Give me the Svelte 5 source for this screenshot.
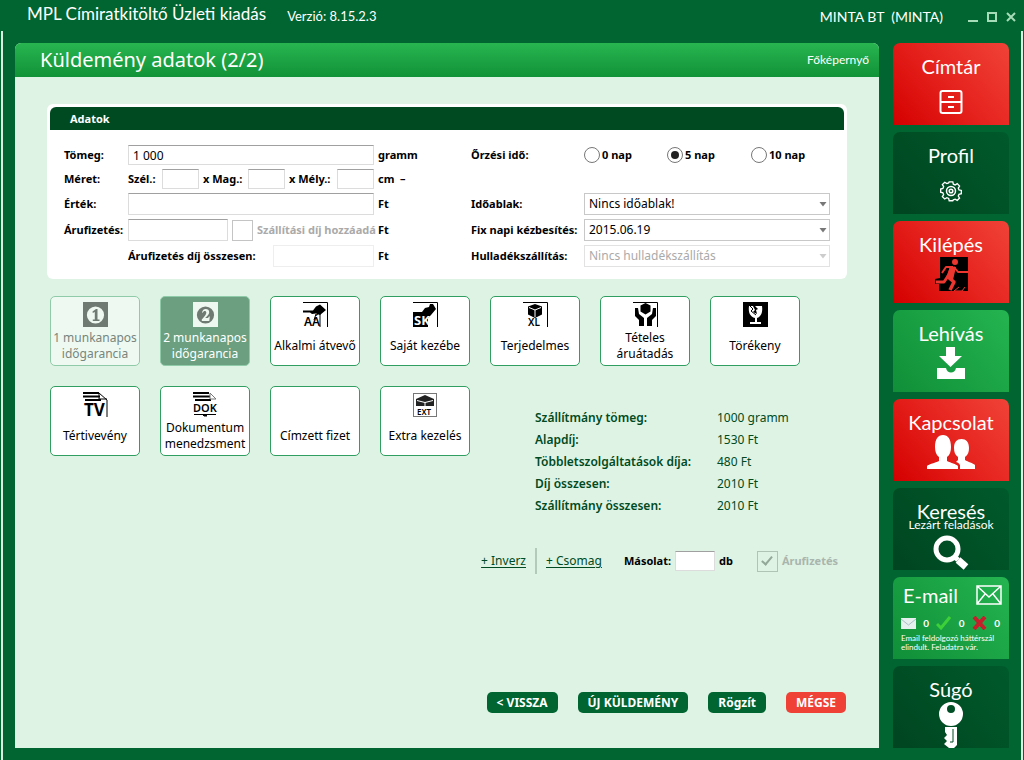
<script>
  let weight = $state('1 000');
  let storage = $state('5');
  const storageOptions = ['0', '5', '10'];
  const services = [
    { icon: 'one', label: '1 munkanapos időgarancia', state: 'faded' },
    { icon: 'two', label: '2 munkanapos időgarancia', state: 'selected' },
    { icon: 'aa', label: 'Alkalmi átvevő' },
    { icon: 'sk', label: 'Saját kezébe' },
    { icon: 'xl', label: 'Terjedelmes' },
    { icon: 'hands', label: 'Tételes áruátadás' },
    { icon: 'glass', label: 'Törékeny' },
    { icon: 'tv', label: 'Tértivevény' },
    { icon: 'dok', label: 'Dokumentum menedzsment' },
    { icon: 'none', label: 'Címzett fizet' },
    { icon: 'ext', label: 'Extra kezelés' }
  ];
  const summary = [
    ['Szállítmány tömeg:', '1000 gramm'],
    ['Alapdíj:', '1530 Ft'],
    ['Többletszolgáltatások díja:', '480 Ft'],
    ['Díj összesen:', '2010 Ft'],
    ['Szállítmány összesen:', '2010 Ft']
  ];
</script>

{#snippet arrow()}
  <svg class="arrow" width="8" height="6" viewBox="0 0 8 6" aria-hidden="true"><path d="M0.5 1h7L4 5.5z" fill="currentColor" /></svg>
{/snippet}

{#snippet serviceIcon(name)}
  <svg width="25" height="25" viewBox="0 0 25 25" aria-hidden="true">
    {#if name === 'one' || name === 'two'}
      <rect width="25" height="25" fill={name === 'one' ? '#6f7a73' : '#eef8f1'} />
      <circle cx="12.5" cy="13" r="8.6" fill={name === 'one' ? '#eef8f1' : '#6f7a73'} />
      {#if name === 'one'}
        <path d="M9.5 9.5 13 7h1.5v10.5h2V19H9.8v-1.500h2V10l-2 .9z" fill="#6f7a73" />
      {:else}
        <path d="M9 10.500C9.500 8 11 7 12.700 7c2 0 3.500 1.200 3.500 3.200 0 1.800-1.200 3-4 5.800H15l1-1.500h.8L16.300 19H8.800v-1.500c3-3 4.500-5 4.500-6.900 0-1.100-.6-1.700-1.500-1.700-.9 0-1.600.6-2 1.900z" fill="#eef8f1" />
      {/if}
    {:else if name === 'aa'}
      <path d="M0 .5h24.500V25" fill="none" stroke="#000" />
      <path d="M0 8.500h10l3-4 4-2 6 5.500-6 5-4-1.500-4 .500-2-1.500H0z" fill="#000" />
      <path d="M17 10v15M13 12l-2 6" stroke="#000" />
      <text x="1" y="24" textLength="0" font-family="Noto Sans" font-size="12" font-weight="600">AÁ</text>
    {:else if name === 'sk'}
      <path d="M0 .5h24.500V25" fill="none" stroke="#000" />
      <path d="M0 10h9l3-4 4-1 1-3h3l3 5-5 6-3 3v9H0z" fill="#000" />
      <text x="1" y="23" font-family="Noto Sans" font-size="13" font-weight="700" fill="#fff">SK</text>
    {:else if name === 'xl'}
      <path d="M0 .5h24.500V25" fill="none" stroke="#000" />
      <path d="m12 2 7 2.500v8L12 16l-7-3.500v-8z" fill="#000" />
      <path d="m6 5.500 6 2.500 6-2.500M12 8v7" fill="none" stroke="#fff" />
      <text x="5" y="24" font-family="Noto Sans" font-size="10" font-weight="600">XL</text>
    {:else if name === 'hands'}
      <path d="M0 .5h24.500V25" fill="none" stroke="#000" />
      <path d="m12.500 1 5 2.500v6l-5 3-5-3v-6z" fill="#000" />
      <path d="M2 6h3l1 6 5 4v8H6v-6l-4-4zM23 6h-3l-1 6-5 4v8h5v-6l4-4z" fill="#000" />
    {:else if name === 'glass'}
      <rect width="25" height="25" fill="#000" />
      <path d="M6 4l4 0 2 4-2 2 4 2-1-4 2-1-3-3h7c1 6-1 11-5 12v4h4v2H7v-2h5v-4C7 15 5 10 6 4z" fill="#fff" />
      <path d="m6 3 4 4-2 2 5 4" fill="none" stroke="#000" />
    {:else if name === 'tv'}
      <path d="M0 1h16M0 4.500h17M2 8h16" stroke="#000" stroke-width="2" />
      <path d="M16 1l8 7v17M16 1v6h8" fill="none" stroke="#000" />
      <text x="1" y="24" font-family="Noto Sans" font-size="17" font-weight="700">TV</text>
    {:else if name === 'dok'}
      <path d="M0 1h16M0 4.500h17M2 8h16" stroke="#000" stroke-width="2" />
      <path d="m17 1 6 6h-6z" fill="none" stroke="#777" />
      <text x="0" y="20" font-family="Noto Sans" font-size="11" font-weight="600">DOK</text>
      <path d="M1 22.500h22M9 22l2 2h3l-2-2" stroke="#000" />
    {:else if name === 'ext'}
      <rect x=".5" y="1.500" width="23" height="23" fill="#fff" stroke="#777" />
      <path d="m12 3 9 4v7H3V7z" fill="#222" />
      <path d="m4 8.500 8 2 8-2M12 10v4" fill="none" stroke="#fff" />
      <text x="4" y="23" font-family="Noto Sans" font-size="8" font-weight="600">EXT</text>
    {/if}
  </svg>
{/snippet}

<div class="app">
  <header class="titlebar">
    <h1>MPL Címiratkitöltő Üzleti kiadás</h1>
    <span class="version">Verzió: 8.15.2.3</span>
    <span class="user">MINTA BT&nbsp; (MINTA)</span>
    <div class="window-buttons">
      <button aria-label="Kis méret"><svg width="10" height="10"><path d="M0 9h10" stroke="#a6dcb8" stroke-width="2" /></svg></button>
      <button aria-label="Teljes méret"><svg width="10" height="10"><rect x="1" y="1" width="8" height="8" fill="none" stroke="#a6dcb8" stroke-width="2" /></svg></button>
      <button aria-label="Bezárás"><svg width="10" height="10"><path d="m1 1 8 8M9 1 1 9" stroke="#a6dcb8" stroke-width="2" /></svg></button>
    </div>
  </header>

  <div class="frame">
    <main>
      <div class="main-head">
        <h2>Küldemény adatok (2/2)</h2>
        <a href="#home">Főképernyő</a>
      </div>
      <div class="content">
        <section class="card">
          <h3>Adatok</h3>
          <div class="form">
            <label for="weight">Tömeg:</label>
            <input id="weight" type="text" bind:value={weight} />
            <span class="unit">gramm</span>
            <span>Őrzési idő:</span>
            <div class="radios">
              {#each storageOptions as days}
                <label><input type="radio" name="storage" value={days} bind:group={storage} />{days} nap</label>
              {/each}
            </div>

            <span>Méret:</span>
            <div class="dims">
              <label for="w">Szél.:</label><input id="w" type="text" />
              <label for="h">x Mag.:</label><input id="h" type="text" />
              <label for="d">x Mély.:</label><input id="d" type="text" />
            </div>
            <span class="unit">cm&nbsp; –</span>
            <span></span><span></span>

            <label for="value">Érték:</label>
            <input id="value" type="text" />
            <span class="unit">Ft</span>
            <label for="window">Időablak:</label>
            <div class="select"><select id="window"><option>Nincs időablak!</option></select>{@render arrow()}</div>

            <label for="cod">Árufizetés:</label>
            <div class="cod">
              <input id="cod" type="text" />
              <label class="muted"><input type="checkbox" disabled />Szállítási díj hozzáadása</label>
            </div>
            <span class="unit">Ft</span>
            <label for="fixday">Fix napi kézbesítés:</label>
            <div class="select"><select id="fixday"><option>2015.06.19</option></select>{@render arrow()}</div>

            <span></span>
            <div class="total">
              <label for="total">Árufizetés díj összesen:</label>
              <input id="total" type="text" disabled />
            </div>
            <span class="unit">Ft</span>
            <label for="waste">Hulladékszállítás:</label>
            <div class="select off"><select id="waste" disabled><option>Nincs hulladékszállítás</option></select>{@render arrow()}</div>
          </div>
        </section>

        <section class="services">
          {#each services as s}
            <button class="service {s.state ?? ''}">
              {@render serviceIcon(s.icon)}
              <span>{s.label}</span>
            </button>
          {/each}
          <dl class="summary">
            {#each summary as [name, value]}
              <dt>{name}</dt>
              <dd>{value}</dd>
            {/each}
          </dl>
        </section>

        <div class="extras">
          <a href="#inverz">+ Inverz</a>
          <span class="bar"></span>
          <a href="#csomag">+ Csomag</a>
          <label class="copies">Másolat:<input type="text" />db</label>
          <label class="muted"><input type="checkbox" checked disabled />Árufizetés</label>
        </div>

        <footer>
          <button>&lt; VISSZA</button>
          <button>ÚJ KÜLDEMÉNY</button>
          <button>Rögzít</button>
          <button class="cancel">MÉGSE</button>
        </footer>
      </div>
    </main>

    <nav>
      <button class="tile red">
        <span>Címtár</span>
        <svg class="mid" width="24" height="24" viewBox="0 0 24 24"><g fill="none" stroke="#fff" stroke-width="2"><rect x="1.500" y="1" width="21" height="22" rx="2" /><path d="M2 12h20" /></g><path d="M9 6h6v2H9zM9 16h6v2H9z" fill="#fff" /></svg>
      </button>
      <button class="tile dark">
        <span>Profil</span>
        <svg class="mid" width="24" height="24" viewBox="0 0 24 24" fill="none" stroke="#fff" stroke-width="1.500"><path d="m10 2 4 0 .6 2.700 2 .8 2.300-1.500 2.600 2.700-1.400 2.300.8 2 2.600.6v3.600l-2.600.6-.8 2 1.400 2.300-2.600 2.600-2.300-1.400-2 .8L14 23h-4l-.6-2.500-2-.8L5 21.100l-2.600-2.600 1.400-2.300-.8-2-2.500-.6V10l2.500-.6.8-2L2.400 5 5 2.500 7.400 4l2-.8z" transform="translate(1.200 1) scale(.9)" /><circle cx="12" cy="12" r="4.500" /><circle cx="12" cy="12" r="1.800" /></svg>
      </button>
      <button class="tile red">
        <span>Kilépés</span>
        <svg width="33" height="34" viewBox="0 0 33 34"><path d="M5 0h28v34H4v-7H0v-5l5-1z" fill="#000" /><g fill="none" stroke="#ec3730" stroke-linejoin="round"><circle cx="20" cy="5" r="1.500" stroke-width="3" /><path d="M17 10 13 20l6 5-4 8" stroke-width="3.500" /><path d="M13 19 9 25H1" stroke-width="3" /><path d="M18 10h-7l-4 6M19 10l4 5h10" stroke-width="2" /><path d="m24 30-5 4h8l3-4" stroke-width="1" /></g><path d="m15 9 6 1-3 13-6-3z" fill="#ec3730" /></svg>
      </button>
      <button class="tile green">
        <span>Lehívás</span>
        <svg width="30" height="34" viewBox="0 0 30 34" fill="#fff"><path d="M10 1h9v9h7L14.500 21 3 10h7zM1 22h9c1 6 9 6 10 0h9v11H1z" /></svg>
      </button>
      <button class="tile red">
        <span>Kapcsolat</span>
        <svg width="48" height="34" viewBox="0 0 48 34" fill="#fff"><path d="M0 34v-3c2-2 8-3 12-5v-4c-3-2-4-6-4-10C8 4 11 0 16 0s8 4 8 12c0 4-1 8-4 10v4c4 2 9 3 11 5v3z" /><path d="M33 34v-4c-1-2-3-3-4-3l2-2v-3c-3-2-4-5-4-9 0-6 3-9 7.500-9S42 7 42 13c0 4-1 7-4 9v3c3 2 8 3 10 5v4z" /></svg>
      </button>
      <button class="tile dark search">
        <span>Keresés</span>
        <small>Lezárt feladások</small>
        <svg width="36" height="35" viewBox="0 0 36 35" fill="none" stroke="#fff"><circle cx="14" cy="14" r="11" stroke-width="5" /><path d="m22 22 3 3" stroke-width="5" /><path d="m25 25 8 7" stroke-width="7" /></svg>
      </button>
      <button class="tile green mail">
        <div class="mail-head">
          <span>E-mail</span>
          <svg width="26" height="20" viewBox="0 0 26 20" fill="none" stroke="#fff" stroke-width="1.500"><path d="M1 1h24v18H1zM1 1l12 11L25 1M1 19l8-10M25 19 17 9" /></svg>
        </div>
        <div class="mail-counts">
          <svg width="15" height="11" viewBox="0 0 15 11"><rect width="15" height="11" fill="#e6f0ee" /><path d="m0 1 7.500 6L15 1" fill="none" stroke="#a8bfc8" /></svg><b>0</b>
          <svg width="15" height="14" viewBox="0 0 15 14"><path d="m1 8 4 4 9-11" fill="none" stroke="#3ed038" stroke-width="3" /></svg><b>0</b>
          <svg width="15" height="14" viewBox="0 0 15 14"><path d="m2 1 11 12M13 1 2 13" stroke="#c51f2c" stroke-width="4" /></svg><b>0</b>
        </div>
        <small>Email feldolgozó háttérszál elindult. Feladatra vár.</small>
      </button>
      <button class="tile dark">
        <span>Súgó</span>
        <svg width="26" height="46" viewBox="0 0 26 46"><path fill-rule="evenodd" d="M13 0a12 12 0 0 1 0 24A12 12 0 0 1 13 0zm0 3a4 4 0 0 0 0 8 4 4 0 0 0 0-8zM7 25h12v18l-3 3h-5l-5-4 3-3-3-3 3-3-2-3z" fill="#fff" /><path d="M15 27v13h-3" fill="none" stroke="#00491f" /></svg>
      </button>
    </nav>
  </div>
</div>

<style>
  :global(body) { margin: 0; background: #006531; }
  * { box-sizing: border-box; }
  .app {
    min-height: 100vh;
    display: flex;
    flex-direction: column;
    background: #006531;
    color: #000;
    font: 12px/16px "Noto Sans", sans-serif;
  }
  button, input, select { font: inherit; color: inherit; margin: 0; }
  button { cursor: pointer; border: 0; padding: 0; }
  h1, h2, h3, dl, dd { margin: 0; font-weight: 400; }

  .titlebar {
    height: 31px;
    display: flex;
    align-items: center;
    padding: 0 8px 0 27px;
    color: #fff;
    font-family: Lato, sans-serif;
  }
  h1 { font-size: 17px; line-height: 28px; padding-bottom: 3px; }
  .version { margin-left: 21px; font-size: 13px; }
  .user { margin-left: auto; font-size: 14px; padding-top: 2px; }
  .window-buttons { display: flex; gap: 9px; margin-left: 25px; padding-top: 3px; }
  .window-buttons button { background: none; display: flex; }

  .frame {
    flex: 1;
    display: flex;
    gap: 14px;
    margin: 0 1px;
    padding: 12px;
    border: solid #d9f1e1;
    border-width: 0 2px;
  }
  main {
    flex: 1;
    min-width: 0;
    display: flex;
    flex-direction: column;
    background: #def3e4;
    border-radius: 6px 6px 0 0;
  }
  .main-head {
    height: 34px;
    display: flex;
    align-items: center;
    justify-content: space-between;
    padding: 0 10px 0 25px;
    border-radius: 6px 6px 0 0;
    background: linear-gradient(#28b550, #119238);
    color: #fff;
  }
  h2 { font-size: 20px; line-height: 28px; }
  .main-head a { color: #fff; text-decoration: none; font: 12px/16px Lato, sans-serif; }
  .content { flex: 1; display: flex; flex-direction: column; padding: 27px 32px 35px; }

  .card { background: #fff; border-radius: 6px; padding: 3px 3px 12px; }
  h3 {
    height: 23px;
    padding-left: 20px;
    border-radius: 6px 6px 0 0;
    background: #004a22;
    color: #fff;
    font-size: 11px;
    line-height: 23px;
    font-weight: 700;
  }
  .form {
    display: grid;
    grid-template-columns: 64px minmax(0, 1fr) 97px 113px minmax(0, 1fr);
    grid-template-rows: 20px 20px 22px 22px 22px;
    row-gap: 4px;
    align-items: center;
    padding: 15px 14px 0;
    font-size: 11px;
    font-weight: 700;
    white-space: nowrap;
  }
  .unit { padding-left: 4px; }
  input[type='text'] {
    width: 100%;
    min-width: 0;
    height: 100%;
    padding: 0 4px;
    border: 1px solid #dcdcdc;
    border-top-color: #a0a0a0;
    border-radius: 0;
    background: #fff;
    font-size: 12px;
    font-weight: 400;
    outline: 0;
  }
  .dims {
    height: 100%;
    display: grid;
    grid-template-columns: 34fr 37fr 49fr 37fr 52fr 37fr;
    align-items: center;
  }
  .dims label + input + label { padding-left: 4px; }
  .cod, .total { display: flex; height: 100%; align-items: center; gap: 4px; overflow: hidden; }
  .cod { margin-right: -2px; }
  .cod > input[type='text'] { width: 100px; flex: none; }
  .total { justify-content: space-between; }
  .total input[type='text'] { width: 101px; border-color: #eee; }
  .muted { display: flex; align-items: center; gap: 4px; color: #a9b5ad; }
  .cod .muted { color: #aaa; }
  input[type='checkbox'] {
    appearance: none;
    flex: none;
    width: 21px;
    height: 21px;
    border: 1px solid #c4c4c4;
    display: grid;
    place-content: center;
  }
  input[type='checkbox']:checked { border-color: #b0c4b6; }
  input[type='checkbox']:checked::before {
    content: '';
    width: 4px;
    height: 9px;
    margin-bottom: 3px;
    border: solid #93a899;
    border-width: 0 2px 2px 0;
    transform: rotate(40deg);
  }
  .radios { display: grid; grid-template-columns: 83px 84px 1fr; }
  .radios label { display: flex; align-items: center; gap: 2px; }
  input[type='radio'] {
    appearance: none;
    width: 16px;
    height: 16px;
    border: 1px solid #777;
    border-radius: 50%;
    display: grid;
    place-content: center;
    background: #fff;
  }
  input[type='radio']:checked::before {
    content: '';
    width: 8px;
    height: 8px;
    border-radius: 50%;
    background: #222;
  }
  .select { position: relative; height: 22px; font-weight: 400; }
  select {
    appearance: none;
    width: 100%;
    height: 100%;
    padding: 0 16px 0 4px;
    border: 1px solid #c8c8c8;
    border-radius: 0;
    background: #fff;
    font-size: 12px;
    font-weight: 400;
  }
  .arrow { position: absolute; right: 3px; top: 8px; color: #777; pointer-events: none; }
  .off select { border-color: #e2e2e2; color: #aaa; opacity: 1; }
  .off .arrow { color: #ccc; }

  .services {
    display: grid;
    grid-template-columns: repeat(7, 90px);
    gap: 20px;
    align-items: start;
    padding: 17px 3px 0;
  }
  .service {
    height: 70px;
    display: flex;
    flex-direction: column;
    align-items: center;
    gap: 3px;
    padding: 5px 2px 0;
    border: 1px solid #2f9e60;
    border-radius: 5px;
    background: #fff;
    text-align: center;
  }
  .service svg { flex: none; }
  .service span { height: 32px; display: flex; align-items: center; }
  .faded { background: #eef9f1; border-color: #8fcba8; color: #77857c; }
  .selected { background: #6b9f7f; border-color: #8fcba8; color: #fff; }
  .summary {
    grid-column: 5 / 8;
    display: grid;
    grid-template-columns: 182px 1fr;
    margin: 21px 0 0 45px;
    line-height: 22px;
    color: #004a22;
  }
  dt { font-weight: 600; }

  .extras {
    display: flex;
    align-items: center;
    justify-content: flex-end;
    margin-top: 31px;
    padding-right: 9px;
  }
  .extras a { color: #004a22; text-underline-offset: 2px; }
  .bar { width: 2px; height: 26px; margin: 0 9px; background: #b3c9ba; }
  .copies { display: flex; align-items: center; gap: 4px; margin: 0 24px 0 22px; font-size: 11px; font-weight: 700; }
  .copies input[type='text'] { width: 40px; height: 20px; }
  .extras .muted { font-size: 11px; font-weight: 700; }

  footer { display: flex; justify-content: flex-end; gap: 20px; margin-top: auto; padding-right: 1px; }
  footer button {
    height: 21px;
    padding: 0 10px;
    border-radius: 5px;
    background: #006531;
    color: #fff;
    font-weight: 700;
  }
  footer .cancel { background: #ef4136; }

  nav { flex: none; width: 116px; display: grid; grid-template-rows: repeat(8, 82px); gap: 7px; }
  .tile {
    display: flex;
    flex-direction: column;
    align-items: center;
    padding-top: 10px;
    border-radius: 7px 7px 0 0;
    overflow: hidden;
    color: #fff;
    font: 20px/26px Lato, sans-serif;
  }
  .tile svg { flex: none; }
  .tile .mid { margin-top: 11px; }
  .red { background: linear-gradient(50deg, #d40000, #e6231e 50%, #f04338); }
  .green { background: linear-gradient(50deg, #108f38, #24b450); }
  .dark { background: linear-gradient(50deg, #004520, #005a2b); }
  .search small { font-size: 12px; line-height: 12px; margin: -5px 0 4px; }
  .mail { align-items: stretch; padding: 5px 7px 0 8px; text-align: left; }
  .mail-head { display: flex; justify-content: space-between; align-items: center; padding-left: 2px; }
  .mail-counts { display: flex; align-items: center; justify-content: space-between; height: 14px; margin-top: 8px; padding-right: 2px; font-size: 10px; }
  .mail small { font-size: 8px; line-height: 9px; margin-top: 4px; }
</style>
